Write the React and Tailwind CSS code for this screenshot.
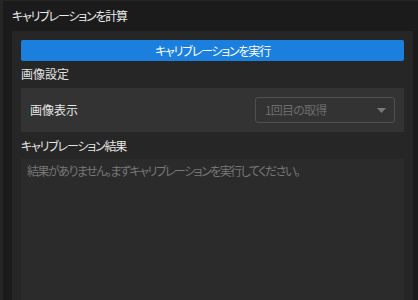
export default function App() {
  const font = "font-['Noto_Sans_CJK_JP','Noto_Sans',sans-serif] [font-feature-settings:'palt']";

  return (
    <div className={`h-[300px] w-[418px] overflow-hidden bg-[#1b1b1b] border-l-[3px] border-t border-[#262626] flex flex-col text-[12px] leading-[16px] ${font}`}>
      {/* Header */}
      <div className="h-[30px] shrink-0 flex items-center pl-[9px] text-[#ececec] tracking-[-1.2px]">
        キャリブレーションを計算
      </div>

      {/* Panel */}
      <div className="flex-1 ml-[9px] mr-[5px] bg-[#262626] px-[9px] pt-[9px] flex flex-col">
        <button className={`h-[21px] w-full rounded-[2px] bg-[#1a7fdd] text-white text-[12px] tracking-[-1.2px] flex items-center justify-center ${font}`}>
          キャリブレーションを実行
        </button>

        <div className="mt-[5px] h-[16px] text-[#e4e4e4]">画像設定</div>

        <div className="mt-[6px] h-[44px] bg-[#333333] flex items-center justify-between pl-[9px] pr-[9px]">
          <span className="text-[#e4e4e4]">画像表示</span>
          <div className="w-[140px] h-[26px] rounded-[3px] border border-[#505050] flex items-center justify-between pl-[9px] pr-[8px] text-[#6c6c6c]">
            <span className="tracking-[-0.8px]">1回目の取得</span>
            <svg width="9" height="5" viewBox="0 0 9 5">
              <path d="M0 0 L9 0 L4.5 5 Z" fill="#7a7a7a" />
            </svg>
          </div>
        </div>

        <div className="mt-[6px] h-[16px] text-[#e4e4e4] tracking-[-1.2px]">キャリブレーション結果</div>

        <div className="mt-[5px] flex-1 bg-[#2b2b2b] pl-[6px] pt-[4px] text-[#777777] tracking-[-1.5px]">
          結果がありません。まずキャリブレーションを実行してください。
        </div>
      </div>
    </div>
  );
}
